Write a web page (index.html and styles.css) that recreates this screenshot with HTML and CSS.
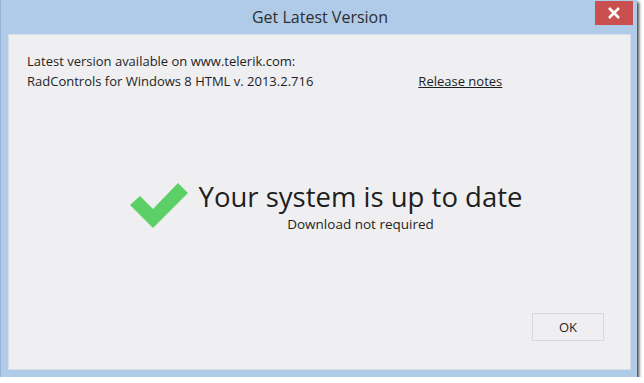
FILE: index.html
```html
<!DOCTYPE html>
<html lang="en">
<head>
  <meta charset="UTF-8">
  <title>Get Latest Version</title>
  <link rel="stylesheet" href="styles.css">
</head>
<body>
  <div class="window">
    <div class="titlebar">
      <span class="title">Get Latest Version</span>
      <div class="close">
        <svg width="14" height="12" viewBox="0 0 14 12">
          <path d="M2 1 L12 11 M12 1 L2 11" stroke="#fff" stroke-width="2.6"/>
        </svg>
      </div>
    </div>

    <div class="panel">
      <div class="info">
        <div>Latest version available on www.telerik.com:</div>
        <div class="info-row">
          <span>RadControls for Windows 8 HTML v. 2013.2.716</span>
          <a href="#" class="notes">Release notes</a>
        </div>
      </div>

      <div class="status">
        <div class="status-row">
          <svg class="check" width="60" height="48" viewBox="0 0 60 48">
            <polygon points="0,22 10,13 23,26 48,0 58,10 23,45" fill="#5ccf66"/>
          </svg>
          <div class="status-text">
            <div class="headline">Your system is up to date</div>
            <div class="sub">Download not required</div>
          </div>
        </div>
      </div>

      <div class="footer">
        <button class="ok">OK</button>
      </div>
    </div>
  </div>
</body>
</html>
```

FILE: styles.css
```css
body {
  margin: 0;
  background: #fff;
  font-family: 'Open Sans', 'Noto Sans', sans-serif;
  color: #1e1e1e;
}
.window {
  width: 637px;
  height: 377px;
  background: #afcbe8;
  border-left: 1px solid #93b3d6;
  box-sizing: border-box;
  display: flex;
  flex-direction: column;
  box-shadow: 2px 2px 3px rgba(0, 0, 0, 0.75);
  position: relative;
}
.titlebar {
  height: 34px;
  display: flex;
  align-items: center;
  justify-content: center;
}
.title {
  font-size: 16px;
  color: #2e2e2e;
  margin-left: 2px;
}
.close {
  position: absolute;
  top: 1px;
  right: 4px;
  width: 38px;
  height: 24px;
  background: #c9504f;
  display: flex;
  align-items: center;
  justify-content: center;
}
.panel {
  margin: 0 6px 7px 7px;
  flex: 1;
  background: #efeff2;
  border: 1px solid #d6dde6;
  display: flex;
  flex-direction: column;
}
.info {
  padding: 16px 0 0 18px;
  font-size: 13px;
  line-height: 20px;
}
.info-row {
  display: flex;
}
.notes {
  margin-left: 105px;
  color: #1e1e1e;
  text-decoration: underline;
}
.status {
  flex: 1;
  display: flex;
  align-items: center;
  justify-content: center;
  padding: 10px 0 0 13px;
}
.status-row {
  display: flex;
  align-items: flex-start;
}
.check {
  margin-right: 9px;
  margin-top: 3px;
}
.status-text {
  display: flex;
  flex-direction: column;
  align-items: center;
}
.headline {
  font-size: 27.5px;
  line-height: 34px;
}
.sub {
  font-size: 13.5px;
  line-height: 20px;
}
.footer {
  display: flex;
  justify-content: flex-end;
  padding: 0 26px 28px 0;
}
.ok {
  width: 72px;
  height: 28px;
  background: #efeff2;
  border: 1px solid #d8d8de;
  font-family: inherit;
  font-size: 13px;
  color: #1e1e1e;
}
```
